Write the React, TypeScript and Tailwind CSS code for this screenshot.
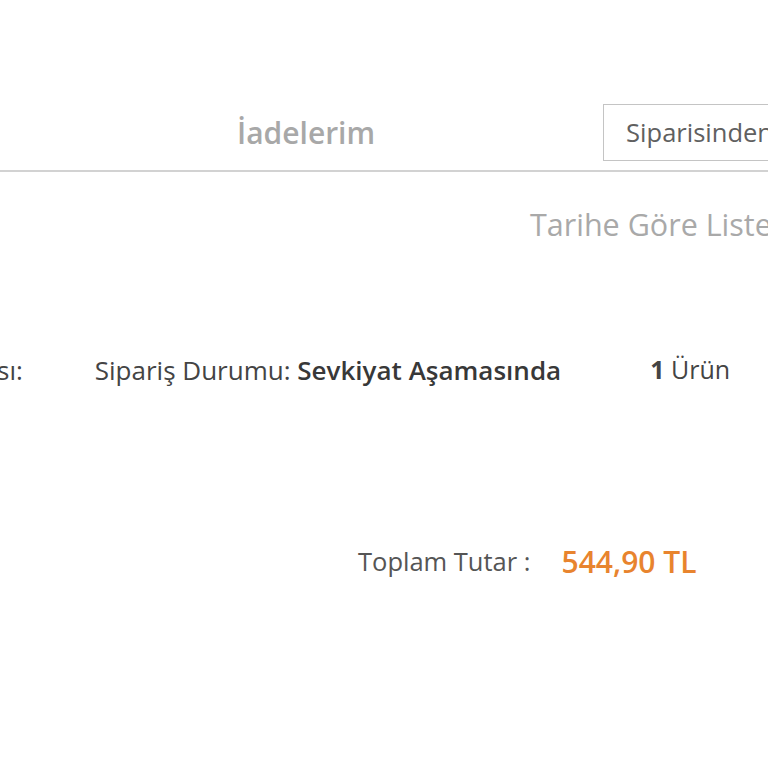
import React from 'react';

const font = { fontFamily: '"Open Sans", "Noto Sans", sans-serif' };

export default function App() {
    return (
        <div className="w-[768px] h-[768px] bg-white overflow-hidden" style={font}>
            {/* tabs + order filter */}
            <div className="flex items-center h-[57px] mt-[104px] whitespace-nowrap">
                <div className="ml-[237px] text-[30px] font-semibold text-[#a8a8a8] leading-none">
                    İadelerim
                </div>
                <div className="ml-[228px] shrink-0 w-[220px] h-[57px] border border-[#c4c4c4] flex items-center pl-[22px] text-[25.5px] text-[#606060]">
                    Siparisinden
                </div>
            </div>
            <div className="mt-[9px] h-[2px] bg-[#d2d2d2]" />

            <div className="mt-[37px] pl-[530px] whitespace-nowrap text-[30.5px] text-[#a9a9a9] leading-none">
                Tarihe Göre Listele
            </div>

            {/* order row */}
            <div className="mt-[117px] flex items-center whitespace-nowrap text-[26px] text-[#444] leading-none">
                <span className="-ml-[3px]">sı:</span>
                <span className="ml-[72px]">
                    Sipariş Durumu: <span className="font-semibold text-[#383838]">Sevkiyat Aşamasında</span>
                </span>
                <span className="ml-[89px] text-[25px]">
                    <span className="font-bold">1</span> Ürün
                </span>
            </div>

            {/* total */}
            <div className="mt-[164px] flex items-center whitespace-nowrap leading-none">
                <span className="ml-[358px] text-[25.5px] text-[#555]">Toplam Tutar :</span>
                <span className="ml-[31px] text-[30px] font-semibold text-[#e8842e]">544,90 TL</span>
            </div>
        </div>
    );
}
